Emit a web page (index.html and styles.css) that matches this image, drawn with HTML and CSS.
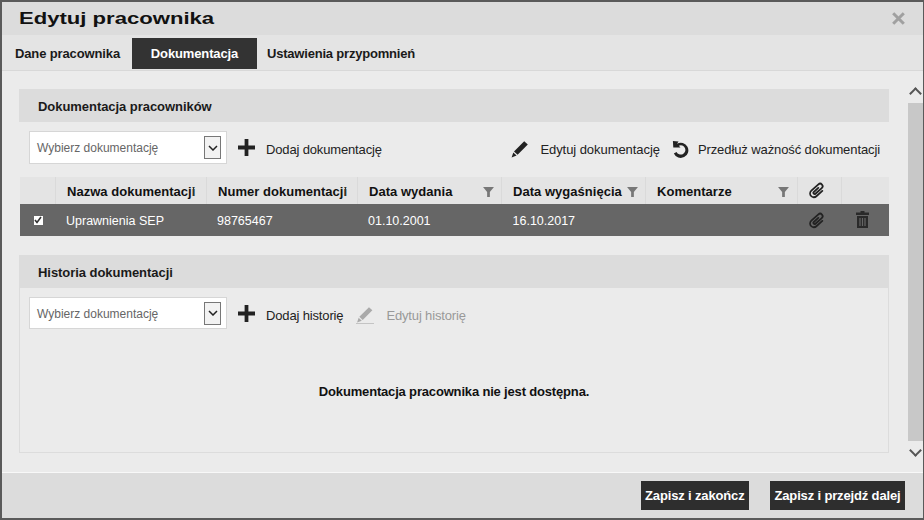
FILE: index.html
```html
<!DOCTYPE html>
<html lang="pl">
<head>
    <meta charset="UTF-8">
    <title>Edytuj pracownika</title>
    <link rel="stylesheet" href="styles.css">
</head>
<body>
<svg class="defs" width="0" height="0">
    <symbol id="i-plus" viewBox="0 0 18 18"><path d="M7 0h4v7h7v4h-7v7H7v-7H0V7h7z"/></symbol>
    <symbol id="i-pencil" viewBox="0 0 18 18"><path d="M13.2 1.2l3.6 3.4L6.6 14.8 3 11.4zM2.300 12.400l3.300 3.200L.6 17.600z"/></symbol>
    <symbol id="i-undo" viewBox="0 0 20 20"><path d="M2 1l6 .6-1.700 2.300A8 8 0 1 1 3 14.200l2.800-1.600a4.900 4.900 0 1 0 2.400-6.600L10 8 2.400 8z"/></symbol>
    <symbol id="i-filter" viewBox="0 0 12 11"><path d="M0 0h12L7.500 5.500V11h-3V5.500z"/></symbol>
    <symbol id="i-clip" viewBox="0 0 18 18"><path transform="rotate(48 9 9)" fill="none" stroke="currentColor" stroke-width="1.800" stroke-linecap="round" d="M12.500 5v8a3.750 3.750 0 0 1-7.500 0V3.500a2.500 2.500 0 0 1 5 0V12a1.200 1.200 0 0 1-2.400 0V6"/></symbol>
    <symbol id="i-trash" viewBox="0 0 13 17"><path d="M4.500 0h4v1.500H13V4H0V1.500h4.500zM1 5h11v12H1zm2.400 2v8h1.200V7zm2.500 0v8h1.200V7zm2.500 0v8h1.200V7z"/></symbol>
</svg>
<div class="dialog">
    <div class="title-bar">
        <h1>Edytuj pracownika</h1>
        <svg class="close" width="13" height="13" viewBox="0 0 13 13"><path d="M1.200 1.200l10.600 10.600M11.800 1.200L1.200 11.800" fill="none" stroke="#a0a0a0" stroke-width="3"/></svg>
    </div>
    <div class="tabs">
        <div class="tab">Dane pracownika</div>
        <div class="tab active">Dokumentacja</div>
        <div class="tab tab-last">Ustawienia przypomnień</div>
    </div>
    <div class="content">
        <div class="main">
            <div class="panel">
                <h2>Dokumentacja pracowników</h2>
                <div class="toolbar">
                    <div class="select"><span class="select-text">Wybierz dokumentację</span><span class="select-arrow"><svg width="10" height="6" viewBox="0 0 10 6"><path d="M1 1l4 4 4-4" fill="none" stroke="#222" stroke-width="1.500"/></svg></span></div>
                    <div class="tool plus"><svg class="ico-plus"><use href="#i-plus"/></svg>Dodaj dokumentację</div>
                    <div class="tool edit-doc"><svg class="ico-pencil"><use href="#i-pencil"/></svg>Edytuj dokumentację</div>
                    <div class="tool extend"><svg class="ico-undo"><use href="#i-undo"/></svg>Przedłuż ważność dokumentacji</div>
                </div>
                <div class="grid grid-head">
                    <div class="cell"></div>
                    <div class="cell">Nazwa dokumentacji<span class="trim"></span></div>
                    <div class="cell">Numer dokumentacji<span class="trim"></span></div>
                    <div class="cell">Data wydania<svg class="ico-filter"><use href="#i-filter"/></svg></div>
                    <div class="cell">Data wygaśnięcia<svg class="ico-filter"><use href="#i-filter"/></svg></div>
                    <div class="cell">Komentarze<svg class="ico-filter"><use href="#i-filter"/></svg></div>
                    <div class="cell"><svg class="ico-clip"><use href="#i-clip"/></svg></div>
                    <div class="cell"></div>
                </div>
                <div class="grid grid-row">
                    <div class="cell cell-check"><span class="check"><svg width="8" height="8" viewBox="0 0 8 8"><path d="M1 4l2 2.500L7 1" fill="none" stroke="#333" stroke-width="1.600"/></svg></span></div>
                    <div class="cell">Uprawnienia SEP</div>
                    <div class="cell">98765467</div>
                    <div class="cell">01.10.2001</div>
                    <div class="cell date-end">16.10.2017</div>
                    <div class="cell"></div>
                    <div class="cell"><svg class="ico-clip"><use href="#i-clip"/></svg></div>
                    <div class="cell cell-trash"><svg class="ico-trash"><use href="#i-trash"/></svg></div>
                </div>
            </div>
            <div class="panel panel-history">
                <h2>Historia dokumentacji</h2>
                <div class="toolbar toolbar-history">
                    <div class="select"><span class="select-text">Wybierz dokumentację</span><span class="select-arrow"><svg width="10" height="6" viewBox="0 0 10 6"><path d="M1 1l4 4 4-4" fill="none" stroke="#222" stroke-width="1.500"/></svg></span></div>
                    <div class="tool plus"><svg class="ico-plus"><use href="#i-plus"/></svg>Dodaj historię</div>
                    <div class="tool disabled"><svg class="ico-pencil"><use href="#i-pencil"/></svg>Edytuj historię</div>
                </div>
                <p class="empty">Dokumentacja pracownika nie jest dostępna.</p>
            </div>
        </div>
        <div class="scrollbar">
            <div class="chevron chevron-up"></div>
            <div class="thumb"></div>
            <div class="chevron chevron-down"></div>
        </div>
    </div>
    <div class="footer">
        <button type="button">Zapisz i zakończ</button>
        <button type="button">Zapisz i przejdź dalej</button>
    </div>
</div>
</body>
</html>
```

FILE: styles.css
```css
* {
    box-sizing: border-box;
}
body {
    margin: 0;
    font-family: "Liberation Sans", Arial, sans-serif;
    font-size: 13px;
    color: #1a1a1a;
    background-color: #ebebeb;
}
.defs {
    display: block;
    height: 0;
}
.dialog {
    width: 924px;
    height: 520px;
    display: flex;
    flex-direction: column;
    border-top: 2px solid #5a5a5a;
    border-left: 2px solid #5a5a5a;
    border-right: 1px solid #5a5a5a;
    border-bottom: 2px solid #5a5a5a;
    background-color: #ebebeb;
}
.title-bar {
    height: 33px;
    flex: none;
    display: flex;
    align-items: center;
    justify-content: space-between;
    padding: 0 18px 0 17px;
    background-color: #dcdcdc;
}
.title-bar h1 {
    margin: 0;
    font-size: 16px;
    font-weight: bold;
    color: #111;
    transform: scaleX(1.38);
    transform-origin: left center;
}
.close {
    display: block;
}
.tabs {
    height: 36px;
    flex: none;
    display: flex;
    align-items: flex-end;
    padding-bottom: 1px;
    background-color: #e4e4e4;
    border-bottom: 1px solid #d8d8d8;
}
.tab {
    height: 31px;
    line-height: 32px;
    padding: 0 12px 0 13px;
    font-weight: bold;
    letter-spacing: -0.13px;
    color: #1a1a1a;
}
.tab.active {
    width: 125px;
    padding: 0;
    text-align: center;
    background-color: #333;
    color: #fff;
}
.tab-last {
    padding-left: 10px;
    letter-spacing: -0.2px;
}
.content {
    flex: 1;
    min-height: 0;
    display: flex;
    padding-left: 17px;
}
.main {
    width: 870px;
    flex: none;
    padding-top: 18px;
}
.panel {
    background-color: #ebebeb;
}
.panel h2 {
    margin: 0;
    height: 33px;
    line-height: 36px;
    padding-left: 19px;
    font-size: 13px;
    font-weight: bold;
    letter-spacing: -0.05px;
    color: #1a1a1a;
    background-color: #dcdcdc;
}
.toolbar {
    height: 55px;
    display: flex;
    align-items: flex-start;
    padding: 9px 0 0 10px;
}
.toolbar-history {
    height: 54px;
    padding-left: 9px;
}
.select {
    width: 198px;
    height: 33px;
    display: flex;
    align-items: center;
    justify-content: space-between;
    padding: 0 5px 0 7px;
    background-color: #fff;
    border: 1px solid #d6d6d6;
    color: #666;
    font-size: 12px;
}
.select-text {
    padding-top: 1px;
}
.toolbar-history .select {
    height: 32px;
}
.select-arrow {
    width: 17px;
    height: 23px;
    display: flex;
    align-items: center;
    justify-content: center;
    border: 1px solid #777;
    background-color: #f2f2f2;
}
.tool {
    height: 33px;
    display: flex;
    align-items: center;
    padding-top: 3px;
    color: #222;
    font-size: 13px;
    letter-spacing: -0.06px;
    white-space: nowrap;
}
.plus {
    margin-left: 11px;
    letter-spacing: -0.15px;
}
.edit-doc {
    margin-left: auto;
}
.extend {
    margin-left: 11px;
    margin-right: 9px;
    letter-spacing: -0.1px;
}
.disabled {
    margin-left: 13px;
    color: #999;
    letter-spacing: -0.15px;
}
.disabled svg {
    margin-right: 12px;
    fill: #aaa;
    border-bottom: 1px solid #c4c4c4;
}
.ico-plus {
    width: 17px;
    height: 17px;
    margin-right: 11px;
    margin-top: -3px;
    fill: #222;
}
.ico-pencil {
    width: 18px;
    height: 18px;
    margin-right: 11px;
    margin-top: -1px;
    fill: #222;
}
.ico-undo {
    width: 19px;
    height: 19px;
    margin-right: 8px;
    fill: #222;
}
.grid {
    display: grid;
    margin-left: 1px;
    grid-template-columns: 36px 151px 151px 144px 144px 152px 44px 47px;
}
.grid-head {
    height: 27px;
    background-color: #e4e4e4;
    font-weight: bold;
    letter-spacing: 0.03px;
    color: #111;
}
.grid-row {
    height: 32px;
    background-color: #666;
    color: #fff;
    font-size: 12.500px;
}
.cell {
    display: flex;
    align-items: center;
    padding-left: 10px;
    padding-top: 2px;
    position: relative;
    white-space: nowrap;
}
.grid-head .cell {
    padding-left: 11px;
    border-right: 1px solid #dadada;
}
.grid-head .cell:last-child {
    border-right: 0;
}
.date-end {
    padding-left: 10.500px;
}
.cell-check {
    padding: 0;
    justify-content: center;
}
.cell-trash {
    padding-left: 14px;
    padding-top: 0;
}
.trim {
    width: 1px;
    height: 9px;
    background-color: #333;
    margin-left: -2px;
}
.ico-filter {
    position: absolute;
    right: 7px;
    top: 10px;
    width: 11px;
    height: 10px;
    fill: #777;
}
.grid-head .cell:nth-child(6) .ico-filter {
    right: 8px;
}
.grid-head .ico-clip {
    margin-left: -1px;
    margin-top: -1px;
}
.grid-row .ico-clip {
    margin-top: -1px;
}
.ico-clip {
    width: 18px;
    height: 18px;
    color: #222;
}
.ico-trash {
    width: 13px;
    height: 17px;
    margin-top: -2px;
    fill: #2a2a2a;
}
.check {
    width: 9px;
    height: 9px;
    display: flex;
    align-items: center;
    justify-content: center;
    background-color: #fff;
}
.panel-history {
    margin-top: 19px;
    height: 198px;
    border: 1px solid #dcdcdc;
    border-top: 0;
}
.panel-history h2 {
    margin: 0 -1px;
}
.empty {
    margin: 0;
    padding-top: 42px;
    text-align: center;
    font-weight: bold;
    letter-spacing: -0.17px;
    color: #111;
}
.scrollbar {
    width: 15px;
    margin-left: 19px;
    padding-top: 16px;
    display: flex;
    flex-direction: column;
    align-items: center;
}
.chevron {
    flex: none;
    width: 9px;
    height: 9px;
    border-top: 2px solid #555;
    border-left: 2px solid #555;
}
.chevron-up {
    margin-top: 2px;
    transform: rotate(45deg);
}
.chevron-down {
    margin-top: -3px;
    transform: rotate(225deg);
}
.thumb {
    width: 15px;
    height: 338px;
    flex: none;
    margin: 5px 0 8px;
    background-color: #c8c8c8;
}
.footer {
    height: 46px;
    flex: none;
    display: flex;
    justify-content: flex-end;
    align-items: flex-start;
    gap: 21px;
    padding: 8px 18px 0 0;
    background-color: #dcdcdc;
    border-top: 1px solid #f8f8f8;
}
.footer button {
    height: 29px;
    padding: 0 4.500px;
    border: 0;
    background-color: #2e2e2e;
    color: #fff;
    font-family: "Liberation Sans", Arial, sans-serif;
    font-size: 13px;
    font-weight: bold;
    letter-spacing: -0.15px;
}
```
